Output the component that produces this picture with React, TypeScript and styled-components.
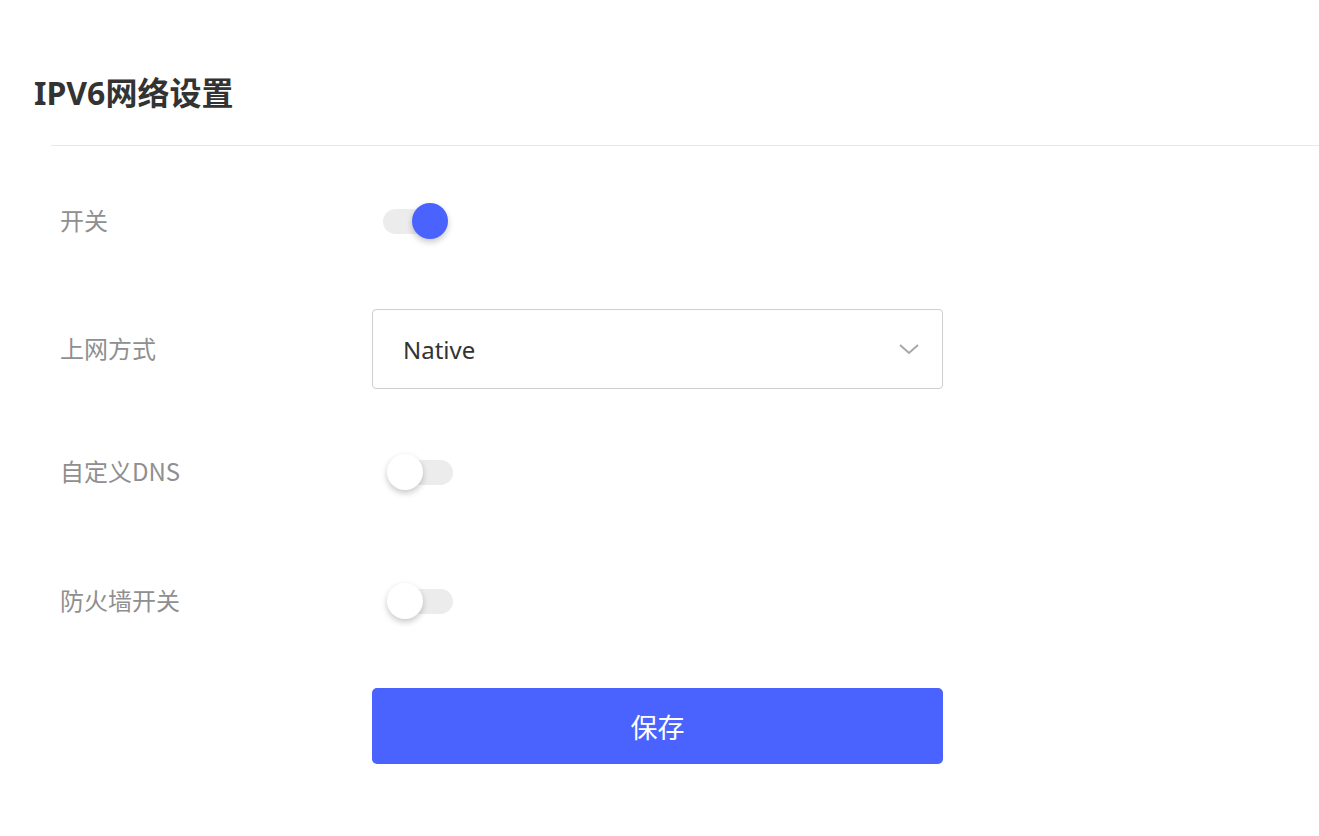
import React, { useState } from "react";
import styled, { createGlobalStyle } from "styled-components";

const Global = createGlobalStyle`
  html, body { margin: 0; padding: 0; background: #fff; }
  body { font-family: "Noto Sans", "Noto Sans CJK SC", sans-serif; }
`;

const Page = styled.div`
  width: 1319px;
  min-height: 836px;
  background: #fff;
`;

const Header = styled.div`
  padding: 72px 0 0 34px;
  height: 145px;
  box-sizing: border-box;
`;

const Title = styled.h1`
  margin: 0;
  font-size: 32px;
  line-height: 42px;
  font-weight: 700;
  color: #333;
  font-family: "Noto Sans", "Noto Sans CJK SC", sans-serif;
`;

const Divider = styled.div`
  margin-left: 51px;
  height: 1px;
  background: #e8e8e8;
`;

const Form = styled.div`
  display: flex;
  flex-direction: column;
  padding: 35px 0 0 60px;
`;

const Row = styled.div<{ $mt?: number }>`
  display: grid;
  grid-template-columns: 312px 571px;
  align-items: center;
  height: 80px;
  margin-top: ${(p) => p.$mt ?? 0}px;
`;

const Label = styled.div`
  font-size: 24px;
  color: #8f8f8f;
  padding-bottom: 4px;
  font-family: "Noto Sans CJK SC", "Noto Sans", sans-serif;
`;

const SwitchCell = styled.div`
  display: flex;
  align-items: center;
  padding-top: 1px;
`;

const SwitchTrack = styled.button<{ $on: boolean }>`
  position: relative;
  width: 65px;
  height: 25px;
  border: none;
  padding: 0;
  border-radius: 13px;
  background: #ececec;
  margin-left: ${(p) => (p.$on ? 11 : 16)}px;
  cursor: pointer;
`;

const Knob = styled.span<{ $on: boolean }>`
  position: absolute;
  top: -6px;
  left: ${(p) => (p.$on ? 29 : -1)}px;
  width: 36px;
  height: 36px;
  border-radius: 50%;
  background: ${(p) => (p.$on ? "#4a63ff" : "#fff")};
  box-shadow: 0 3px 6px rgba(0, 0, 0, 0.22);
`;

const Select = styled.div`
  height: 80px;
  box-sizing: border-box;
  border: 1px solid #cfcfcf;
  border-radius: 4px;
  display: flex;
  align-items: center;
  justify-content: space-between;
  padding: 0 22px 0 30px;
  font-size: 24px;
  color: #333;
  font-family: "Noto Sans", sans-serif;
`;

const Button = styled.button`
  height: 76px;
  width: 571px;
  border: none;
  border-radius: 5px;
  background: #4a63ff;
  color: #fff;
  font-size: 27px;
  font-family: "Noto Sans CJK SC", sans-serif;
  cursor: pointer;
`;

const ButtonRow = styled.div`
  display: flex;
  padding-left: 312px;
  margin-top: 47px;
`;

function Switch({ initial }: { initial: boolean }) {
  const [on, setOn] = useState(initial);
  return (
    <SwitchCell>
      <SwitchTrack $on={on} onClick={() => setOn(!on)}>
        <Knob $on={on} />
      </SwitchTrack>
    </SwitchCell>
  );
}

export default function App() {
  return (
    <Page>
      <Global />
      <Header>
        <Title>IPV6网络设置</Title>
      </Header>
      <Divider />
      <Form>
        <Row>
          <Label>开关</Label>
          <Switch initial={true} />
        </Row>
        <Row $mt={48}>
          <Label>上网方式</Label>
          <Select>
            <span>Native</span>
            <svg width="22" height="14" viewBox="0 0 22 14">
              <path d="M2 3 L11 11 L20 3" fill="none" stroke="#a8a8a8" strokeWidth="2" />
            </svg>
          </Select>
        </Row>
        <Row $mt={43}>
          <Label>自定义DNS</Label>
          <Switch initial={false} />
        </Row>
        <Row $mt={49}>
          <Label>防火墙开关</Label>
          <Switch initial={false} />
        </Row>
        <ButtonRow>
          <Button>保存</Button>
        </ButtonRow>
      </Form>
    </Page>
  );
}
